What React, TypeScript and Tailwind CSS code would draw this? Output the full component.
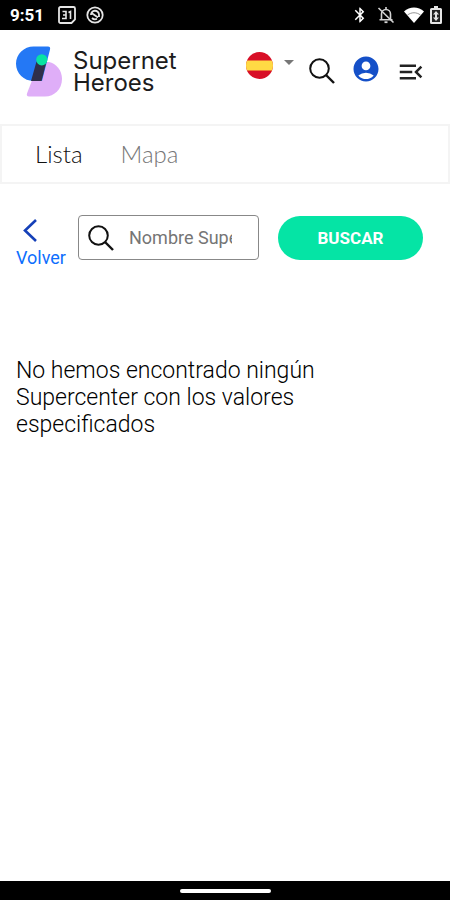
import { useState } from 'react';
import { MdAccountCircle, MdBluetooth, MdMenuOpen } from 'react-icons/md';

function StatusBar() {
  return (
    <div className="flex h-[30px] items-center justify-between bg-black pr-2 pl-[10px] text-white">
      <div className="flex items-center">
        <span className="w-12 font-['Roboto'] text-[17px] leading-5 font-bold">9:51</span>
        <div className="flex gap-[10px]">
          <svg className="h-[18px] w-[18px]" viewBox="0 0 18 18" fill="none" stroke="#e5e5e5">
            <path d="M2.500 1h13a1.500 1.500 0 0 1 1.500 1.500v11L13.500 17h-11A1.500 1.500 0 0 1 1 15.500v-13A1.500 1.500 0 0 1 2.500 1Z" strokeWidth="1.800" />
            <path d="M4.500 5.500h3.500v7h-4M5 9h3M10.500 6.500l2-1v7.500" strokeWidth="1.600" />
          </svg>
          <svg className="h-[18px] w-[18px]" viewBox="0 0 18 18" fill="none" stroke="#e5e5e5">
            <circle cx="9" cy="9" r="7.700" strokeWidth="1.800" />
            <path d="M5 9a4 4 0 0 1 8-.5v2.500M5.500 7l6.500 4.500M6 12a4.500 4.500 0 0 0 5 .8" strokeWidth="1.800" />
          </svg>
        </div>
      </div>
      <div className="flex items-center">
        <MdBluetooth className="mr-2 h-[18px] w-[18px]" />
        <svg className="mr-[9px] h-[18px] w-[18px]" viewBox="0 0 18 18" fill="none" stroke="#d4d4d4">
          <path d="M4.500 13.500V8a4.500 4.500 0 0 1 9 0v5.500M2.500 13.800h13M9 3V1" strokeWidth="1.600" />
          <path d="M7.500 16.200h3" strokeWidth="1.800" />
          <path d="M1.500 2l15 14.500" strokeWidth="1.600" />
        </svg>
        <svg className="mr-[6px] h-[16px] w-[20px]" viewBox="0 0 20 16">
          <path d="M0 4.500C5.500-.7 14.500-.7 20 4.500L10 16Z" fill="#fff" />
          <path d="M3.500 8C7.500 5 12.500 5 16.500 8" fill="none" stroke="#777" strokeWidth=".8" />
        </svg>
        <svg className="h-[18px] w-[12px]" viewBox="0 0 12 18">
          <path d="M4 0h4v2h2.500A1.500 1.500 0 0 1 12 3.500v13a1.500 1.500 0 0 1-1.500 1.500h-9A1.500 1.500 0 0 1 0 16.500v-13A1.500 1.500 0 0 1 1.500 2H4Z" fill="#e5e5e5" />
          <path d="M2 4h8v12H2Z" fill="#222" />
          <path d="M6 5l3 3.500H7v3h2L6 15l-3-3.500h2v-3H3Z" fill="#e5e5e5" />
        </svg>
      </div>
    </div>
  );
}

function Logo() {
  return (
    <a href="#" className="flex items-center gap-[11px]">
      <svg className="h-[51px] w-[46px]" viewBox="0 0 46 51" aria-hidden="true">
        <path d="M23 16h10c7 1.500 13 8 13 17 0 10-7.500 17.500-17 17.500H13c-2 0-2.600-1.400-2-3Z" fill="#dfaef8" />
        <path d="M17.500.5H32c1.800 0 2.500 1.200 2 3L26 35H17.500C8 35 0 27.500 0 17.800S8 .5 17.500.5Z" fill="#2478f5" />
        <path d="M20.500 15.500h10L25.500 35H15Z" fill="#2f2f4b" />
        <circle cx="25.800" cy="13.800" r="5.600" fill="#08e3a3" />
      </svg>
      <span className="font-['Inter'] text-2xl leading-[22px] text-[#1c1c1c]">
        Supernet
        <br />
        Heroes
      </span>
    </a>
  );
}

function SearchIcon() {
  return (
    <svg className="h-[26px] w-[26px]" viewBox="0 0 26 26" fill="none" stroke="#111" strokeWidth="2" aria-hidden="true">
      <circle cx="10.500" cy="10.500" r="9.300" />
      <path d="M17 17l8 8" strokeWidth="2.400" />
    </svg>
  );
}

function SpainFlag() {
  return (
    <svg className="h-[27px] w-[27px] overflow-hidden rounded-full" viewBox="0 0 27 27" aria-hidden="true">
      <path d="M0 0h27v27H0Z" fill="#d80f27" />
      <path d="M0 8.500h27v10H0Z" fill="#ffda44" />
    </svg>
  );
}

function Header() {
  return (
    <header className="flex h-[94px] items-start justify-between pt-4 pr-6 pl-4">
      <Logo />
      <div className="flex items-start">
        <button type="button" aria-label="Idioma" className="mt-[6px] mr-[15px] flex items-center">
          <SpainFlag />
          <svg className="mb-[6px] ml-[11px] h-[5px] w-[10px]" viewBox="0 0 10 5">
            <path d="M0 0h10L5 5Z" fill="#777" />
          </svg>
        </button>
        <button type="button" aria-label="Buscar" className="mt-3 mr-4">
          <SearchIcon />
        </button>
        <button type="button" aria-label="Cuenta" className="mt-2 mr-[15px]">
          <MdAccountCircle className="h-[30px] w-[30px] text-[#1550c8]" />
        </button>
        <button type="button" aria-label="Menú" className="mt-[11px]">
          <MdMenuOpen className="h-[30px] w-[30px] text-[#222]" />
        </button>
      </div>
    </header>
  );
}

function Tabs() {
  const [tab, setTab] = useState('Lista');

  return (
    <nav className="flex h-[60px] items-center gap-[38px] border-2 border-[#f4f4f4] pl-[33px] font-['Lato'] text-2xl leading-7 font-light">
      {['Lista', 'Mapa'].map((name) => (
        <button
          key={name}
          type="button"
          onClick={() => setTab(name)}
          className={tab === name ? 'text-[#111]' : 'text-[#777]'}
        >
          {name}
        </button>
      ))}
    </nav>
  );
}

function SearchForm() {
  return (
    <form className="flex items-start pt-[31px] pr-[27px] pl-4" onSubmit={(e) => e.preventDefault()}>
      <a href="#" className="mr-3 flex w-[50px] shrink-0 flex-col pt-1 text-lg leading-5 text-[#0d6efd]">
        <svg className="mb-[6px] ml-[7px] h-[23px] w-[14px]" viewBox="0 0 14 23" fill="none" stroke="#1540b8" strokeWidth="2.600" aria-hidden="true">
          <path d="M13 1L2 11.500L13 22" />
        </svg>
        Volver
      </a>
      <label className="mr-[19px] flex h-[45px] min-w-0 flex-1 items-center gap-[15px] rounded-[4px] border border-[#888] pr-[26px] pl-[9px]">
        <SearchIcon />
        <input
          type="text"
          aria-label="Nombre Supercenter"
          placeholder="Nombre Supercenter"
          className="w-full min-w-0 flex-1 text-lg leading-6 outline-none placeholder:text-[#757575]"
        />
      </label>
      <button type="submit" className="mt-px h-11 w-[145px] shrink-0 rounded-full bg-[#05e4a5] text-[17px] leading-5 font-bold text-white">
        BUSCAR
      </button>
    </form>
  );
}

export default function App() {
  return (
    <div className="flex min-h-screen flex-col bg-white font-['Roboto',sans-serif]">
      <StatusBar />
      <Header />
      <Tabs />
      <main className="flex-1">
        <SearchForm />
        <p className="mt-[89px] ml-4 max-w-[320px] text-[23px] leading-[27px] font-light text-black">
          No hemos encontrado ningún Supercenter con los valores especificados
        </p>
      </main>
      <div className="flex h-[19px] items-center justify-center bg-black">
        <div className="h-1 w-[91px] rounded-full bg-white" />
      </div>
    </div>
  );
}
